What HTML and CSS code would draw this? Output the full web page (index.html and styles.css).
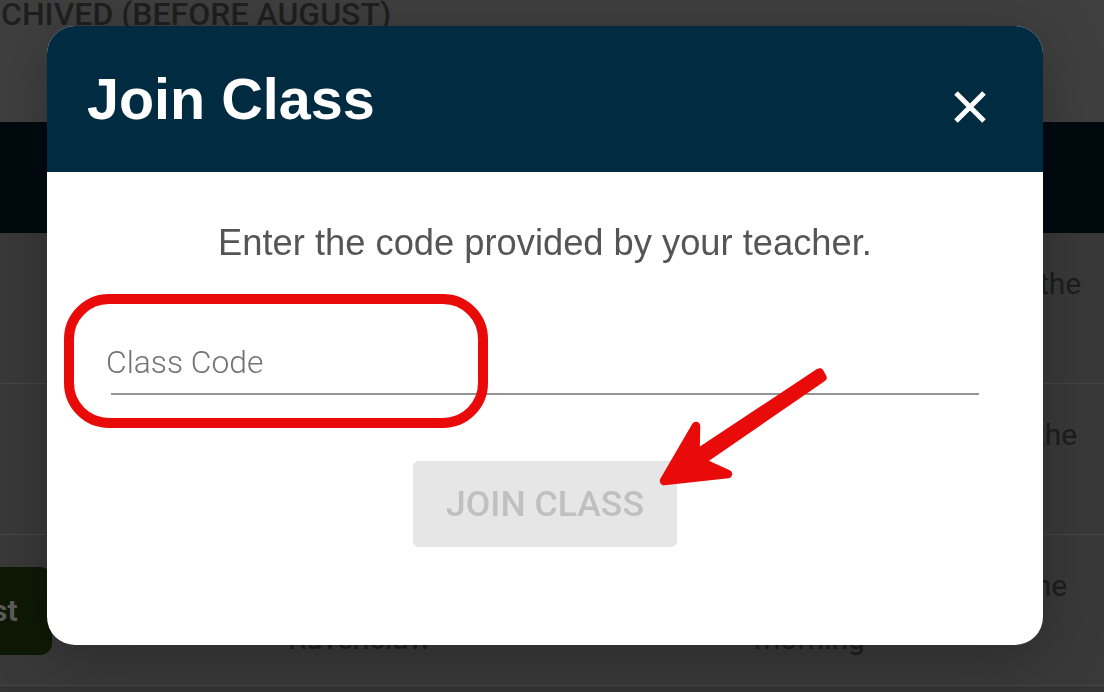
FILE: index.html
```html
<!DOCTYPE html>
<html lang="en">
<head>
<meta charset="utf-8">
<title>Join Class</title>
<link rel="stylesheet" href="styles.css">
</head>
<body>
<div class="page">
  <div class="top"><span class="archived">CHIVED (BEFORE AUGUST)</span></div>
  <div class="band"></div>
  <div class="row">
    <div class="cell c1"></div>
    <div class="cell c2">Gryffindor</div>
    <div class="cell c3">Every<br>afternoon</div>
    <div class="cell c4 r1">the</div>
  </div>
  <div class="row">
    <div class="cell c1"></div>
    <div class="cell c2">Slytherin</div>
    <div class="cell c3">Friday<br>evening</div>
    <div class="cell c4 r2">the</div>
  </div>
  <div class="row">
    <div class="cell c1"><span class="test-btn">st</span></div>
    <div class="cell c2">Hufflepuff<br>Ravenclaw</div>
    <div class="cell c3">Tuesday<br>morning</div>
    <div class="cell c4 r3">tone</div>
  </div>
  <div class="foot"></div>
</div>

<div class="backdrop">
  <div class="modal" role="dialog" aria-labelledby="dlg-title">
    <div class="modal-head">
      <h1 id="dlg-title" class="modal-title">Join Class</h1>
      <button class="close" aria-label="Close">
        <svg width="34" height="34" viewBox="0 0 34 34"><path d="M3 3 L31 31 M31 3 L3 31" stroke="#ffffff" stroke-width="5" fill="none"/></svg>
      </button>
    </div>
    <div class="modal-body">
      <p class="lead">Enter the code provided by your teacher.</p>
      <div class="field"><input class="code-input" type="text" placeholder="Class Code"></div>
      <button class="join-btn" disabled>JOIN CLASS</button>
    </div>
  </div>
</div>

<svg class="annot" width="1104" height="692" viewBox="0 0 1104 692">
  <rect x="69" y="299" width="414" height="124" rx="40" ry="40" fill="none" stroke="#e90a0a" stroke-width="10"/>
  <polygon points="819.6,372.4 695.5,454.5 696,426 664,481 728,474 700.5,461.5 822.4,377.6" fill="#e90a0a" stroke="#e90a0a" stroke-width="8.5" stroke-linejoin="round"/>
</svg>
</body>
</html>
```

FILE: styles.css
```css
html, body {
  margin: 0;
  padding: 0;
}
body {
  width: 1104px;
  height: 692px;
  overflow: hidden;
  background: #3f3f3f;
  font-family: Roboto, "Liberation Sans", sans-serif;
}
.page {
  width: 1104px;
  height: 692px;
  overflow: hidden;
}
.top {
  height: 122px;
  background: #3f3f3f;
  overflow: hidden;
}
.archived {
  display: block;
  margin-top: -2px;
  padding-left: 1px;
  font-weight: 500;
  font-size: 32px;
  line-height: 32px;
  color: #1f1f1f;
  white-space: nowrap;
}
.band {
  height: 111px;
  background: #010a0f;
}
.row {
  height: 150px;
  border-bottom: 1px solid #464646;
  background: #393939;
  display: grid;
  grid-template-columns: 288px 466px 285px 1fr;
  font-size: 30px;
  line-height: 53px;
  color: #1d1d1d;
  overflow: hidden;
}
.cell {
  padding-top: 24px;
  white-space: nowrap;
}
.c1 {
  padding-top: 32px;
}
.c4.r2 {
  text-indent: -4px;
}
.c4.r3 {
  text-indent: -31px;
}
.test-btn {
  display: block;
  width: 52px;
  height: 88px;
  line-height: 88px;
  background: #0d1905;
  border-radius: 0 12px 12px 0;
  color: #5b5b5b;
  font-weight: 700;
  font-size: 30px;
  text-indent: -8px;
  overflow: hidden;
}
.foot {
  height: 10px;
  background: #333333;
}

.backdrop {
  position: fixed;
  inset: 0;
  padding: 26px 0 0 47px;
}
.modal {
  width: 996px;
  height: 619px;
  background: #ffffff;
  border-radius: 28px;
  overflow: hidden;
  display: flex;
  flex-direction: column;
  box-shadow: 0 12px 60px rgba(0, 0, 0, 0.25);
}
.modal-head {
  height: 146px;
  flex: none;
  background: #002b40;
  display: flex;
  align-items: center;
  justify-content: space-between;
  padding: 0 56px 0 40px;
}
.modal-title {
  margin: 0;
  font-family: "Liberation Sans", Arial, sans-serif;
  font-weight: 700;
  font-size: 57.5px;
  color: #ffffff;
  line-height: normal;
}
.close {
  margin-top: 15px;
  padding: 0;
  border: 0;
  background: none;
  width: 34px;
  height: 34px;
  display: block;
}
.close svg {
  display: block;
}
.modal-body {
  padding-top: 49px;
  text-align: center;
}
.lead {
  margin: 0;
  font-family: "Liberation Sans", Arial, sans-serif;
  font-size: 36.3px;
  line-height: 43px;
  color: #555555;
}
.field {
  margin: 78px 64px 0 59px;
  text-align: left;
}
.field::after {
  content: "";
  display: block;
  height: 2px;
  margin-left: 5px;
  background: #949494;
}
.code-input {
  display: block;
  box-sizing: content-box;
  width: 100%;
  height: 40px;
  padding: 0 0 11px 0;
  margin: 0;
  border: 0;
  outline: none;
  background: transparent;
  font-family: Roboto, sans-serif;
  font-weight: 300;
  font-size: 31.8px;
  color: #333333;
}
.code-input::placeholder {
  color: #737373;
  opacity: 1;
}
.join-btn {
  display: flex;
  align-items: center;
  justify-content: center;
  margin: 66px auto 0;
  width: 264px;
  height: 86px;
  padding: 0;
  border: 0;
  border-radius: 6px;
  background: #e6e6e6;
  color: #c0c0c0;
  font-family: Roboto, sans-serif;
  font-weight: 500;
  font-size: 35.6px;
}
.annot {
  position: fixed;
  left: 0;
  top: 0;
  pointer-events: none;
}
```
